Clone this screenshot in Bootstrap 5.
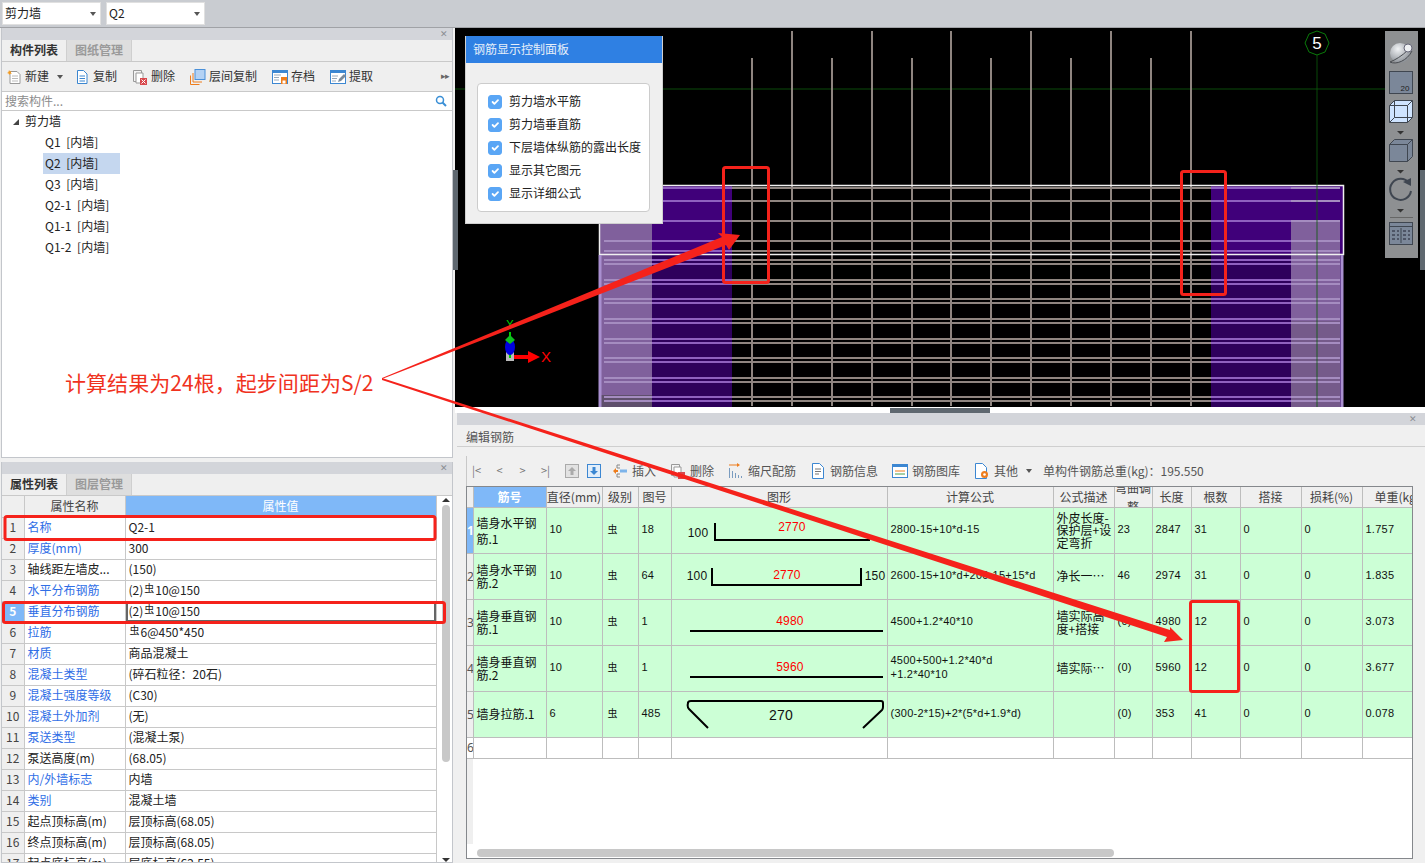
<!DOCTYPE html>
<html lang="zh-CN">
<head>
  <meta charset="UTF-8">
  <meta name="viewport" content="width=device-width, initial-scale=1.0">
  <title>编辑钢筋</title>
  <link href="https://cdn.jsdelivr.net/npm/bootstrap@5.3.3/dist/css/bootstrap.min.css" rel="stylesheet">
  <style>
    html, body { height: 863px; overflow: hidden; }
    body { position: relative; width: 1425px; background: #f0f0f0; color: #222; font: 12px/1.2 "Noto Sans CJK SC", "Noto Sans", sans-serif; }
    .top-strip { height: 28px; padding: 2px 2px 0; background: #c9ccd1; border-bottom: 1px solid #a0a2a6; gap: 5px; }
    .combo { width: 99px; height: 23px; padding: 0 4px 0 2px; background: #fff; border: 1px solid #e0e0e0; font-size: 12px; }
    .caret-down { width: 0; height: 0; border: 3px solid transparent; border-top: 4px solid #555; border-bottom: 0; display: inline-block; }
    .work { height: 835px; }
    .left-col { width: 452px; margin-left: 1px; gap: 4px; }
    .dock { background: #fff; border: 1px solid #c3c6cb; border-top: 0; overflow: hidden; }
    .dock-tree { height: 430px; }
    .dock-props { height: 401px; }
    .grip { height: 12px; background: #d3d5da; color: #8a8d92; font-size: 9px; line-height: 12px; padding-right: 4px; flex: none; }
    .tab-strip { height: 22px; background: #efefef; border-bottom: 1px solid #c9c9c9; flex: none; flex-wrap: nowrap; }
    .tab-item { width: 65px; height: 21px; line-height: 20px; text-align: center; font-weight: 700; color: #333; border-right: 1px solid #cfcfcf; }
    .tab-item.off { background: #dedede; color: #9a9a9a; }
    .tool-row { height: 30px; background: #efefef; border-bottom: 1px solid #c9c9c9; padding-left: 4px; gap: 15px; color: #333; flex: none; }
    .tool-item { display: flex; align-items: center; }
    .tool-item svg { width: 16px; height: 16px; margin-right: 3px; flex: none; }
    .tool-first { margin-right: -4px; }
    .tool-more { margin-left: auto; margin-right: 3px; color: #666; font-size: 9px; letter-spacing: -1px; }
    .find-row { height: 19px; border-bottom: 1px solid #c9c9c9; padding: 0 5px 0 3px; color: #8c8c8c; flex: none; }
    .tree-list { padding: 0; }
    .tree-list li { height: 21px; line-height: 20px; padding-left: 43px; width: 118px; white-space: nowrap; word-spacing: 3px; }
    .tree-list li.root { padding-left: 23px; position: relative; }
    .tree-list li.root::before { content: ""; position: absolute; left: 11px; top: 8px; border: 3px solid transparent; border-right-color: #444; border-bottom-color: #444; }
    .tree-list li.picked { background: #c5d7ef; margin-left: 41px; padding-left: 2px; width: 77px; }
    .props-wrap { position: relative; height: 100%; overflow: hidden; }
    .props-table { width: 434px; table-layout: fixed; border-collapse: collapse; margin: 0; }
    .props-table.table > :not(caption) > * > * { padding: 0 3px; height: 21px; line-height: 18px; border-width: 0 1px 1px 0; border-style: solid; border-color: #c8c8c8; background: #fff; color: #222; white-space: nowrap; overflow: hidden; font-size: 12px; box-shadow: none; vertical-align: top; }
    .props-table.table > thead > tr > th { height: 21px; line-height: 16px; background: #efefef; font-weight: 400; text-align: center; color: #444; vertical-align: middle; }
    .props-table.table > thead > tr > th.lit { background: #7fb8f8; color: #fff; }
    .props-table.table > tbody > tr > td.num { background: #efefef; text-align: center; padding: 0; color: #444; }
    .props-table.table > tbody > tr > td.num.lit { background: #7fb8f8; color: #fff; font-weight: 700; }
    .props-table.table > tbody > tr > td.blue { color: #2f6ee6; }
    .props-table.table > tbody > tr > td.focus { box-shadow: inset 0 0 0 2px #666; }
    .c-num { width: 22px; } .c-name { width: 101px; } .c-val { width: 311px; }
    .steel { font-size: 10px; position: relative; top: -3px; margin: 0 1px; }
    .vbar { position: absolute; left: 436px; top: 0; bottom: 0; width: 15px; background: #fff; }
    .vbar i { position: absolute; left: 4px; top: 9px; width: 8px; height: 257px; background: #c8c8c8; border-radius: 4px; }
    .vbar b { position: absolute; left: 4px; top: 2px; border: 4px solid transparent; border-bottom: 4px solid #333; border-top: 0; }
    .vbar u { position: absolute; left: 4px; bottom: 0; border: 4px solid transparent; border-top: 4px solid #333; border-bottom: 0; }
    .split-v { width: 2px; }
    .right-col { width: 970px; }
    .scene { height: 379px; background: #000; position: relative; flex: none; }
    .scene > svg { display: block; }
    .split-h { height: 6px; background: #fff; position: relative; flex: none; }
    .split-h i { position: absolute; left: 435px; top: 1px; width: 100px; height: 5px; background: #5f6870; }
    .side-tab { position: absolute; top: 170px; width: 5px; height: 100px; background: #5f6870; z-index: 3; }
    .side-l { left: 453px; } .side-r { left: 1420px; }
    .rebar-panel { position: absolute; left: 10px; top: 8px; width: 198px; height: 188px; background: #efefef; border: 1px solid #d0d0d0; border-top: 0; }
    .rebar-panel h6 { height: 27px; margin: 0; padding: 0 7px; line-height: 26px; font-size: 12px; font-weight: 400; background: #2f80e3; color: #e6effa; }
    .check-box { margin: 20px 12px 0 11px; height: 129px; padding: 6px 0 6px 10px; background: #fff; border: 1px solid #ccc; border-radius: 4px; }
    .check-box .form-check { height: 23px; min-height: 0; margin: 0; padding: 0; gap: 7px; }
    .check-box .form-check-input { width: 14px; height: 14px; margin: 0; float: none; flex: none; background-color: #5aa6f5; border-color: #5aa6f5; border-radius: 3px; }
    .check-box .form-check-label { font-size: 12px; color: #222; white-space: nowrap; }
    .edit-dock { height: 450px; margin-left: 2px; flex: none; }
    .edit-dock .grip { padding-right: 8px; }
    .edit-title { height: 22px; padding: 1px 0 0 9px; line-height: 22px; color: #555; background: #f0f0f0; border-bottom: 1px solid #cfcfcf; }
    .edit-body { padding: 9px 13px 4px 9px; height: 416px; }
    .edit-tools { height: 30px; padding-left: 4px; gap: 14px; color: #555; border-left: 1px solid #c8c8c8; }
    .edit-tools .pager { width: 11px; color: #777; font-size: 11px; text-align: center; }
    .edit-tools .tool-item svg { margin-right: 4px; }
    .pager-set { gap: 12px; }
    .arrow-set { gap: 8px; margin-right: -3px; }
    .other-item { margin-right: -3px; }
    .grid-box { position: relative; height: 373px; width: 947px; background: #fff; border: 1px solid #85888c; overflow: hidden; }
    .grid-box::before { content: ""; position: absolute; left: 0; top: 0; width: 6px; height: 357px; background: #efefef; }
    .bar-grid { position: relative; width: 945px; table-layout: fixed; border-collapse: collapse; margin: 0; }
    .bar-grid.table > :not(caption) > * > * { padding: 0 3px 3px; border-width: 0 1px 1px 0; border-style: solid; border-color: #bdbdbd; box-shadow: none; background: #ccffd6; color: #111; height: 46px; font: 11px/14px "Liberation Sans", "Noto Sans CJK SC", sans-serif; letter-spacing: .25px; vertical-align: middle; overflow: hidden; }
    .bar-grid.table > thead > tr > th { height: 20px; padding: 0; background: #efefef; color: #444; font: 12px/14px "Noto Sans CJK SC", sans-serif; letter-spacing: 0; text-align: center; white-space: nowrap; }
    .bar-grid.table > thead > tr > th.lit { background: #7fb8f8; color: #fff; font-weight: 700; }
    .bar-grid.table > tbody > tr > td.zh { padding-bottom: 0; font: 12px/12.500px "Noto Sans CJK SC", sans-serif; letter-spacing: 0; white-space: nowrap; }
    .bar-grid.table > tbody > tr > td.zh-wide { line-height: 16px; }
    .bar-grid.table > tbody > tr > td.grade { font: 10px/14px "Noto Sans CJK SC", sans-serif; letter-spacing: 0; padding-left: 5px; }
    .bar-grid.table > tbody > tr > td.idx { padding: 0; background: #efefef; color: #555; font: 12px/14px "Noto Sans", sans-serif; letter-spacing: 0; text-align: center; border-color: #bdbdbd; }
    .bar-grid.table > tbody > tr > td.idx.lit { background: #7fb8f8; color: #fff; font-weight: 700; }
    .bar-grid.table > tbody > tr > td.draw { padding: 0; }
    .bar-grid.table > tbody > tr > td.draw svg { display: block; }
    .bar-grid.table > tbody > tr.blank > td { height: 21px; background: #fff; }
    .head-clip { height: 20px; overflow: hidden; display: flex; align-items: center; justify-content: center; white-space: normal; line-height: 19px; }
    .head-tail { height: 20px; overflow: hidden; padding-left: 12px; line-height: 19px; text-align: left; white-space: nowrap; }
    .w-i { width: 6px; } .w-a { width: 73px; } .w-b { width: 56px; } .w-c { width: 36px; } .w-d { width: 33px; } .w-e { width: 216px; }
    .w-f { width: 166px; } .w-g { width: 61px; } .w-h { width: 38px; } .w-j { width: 39px; } .w-k { width: 49px; } .w-l { width: 50px; }
    .hbar { position: absolute; left: 10px; bottom: 1px; width: 637px; height: 8px; background: #c8c8c8; border-radius: 4px; }
    .mark-layer { position: absolute; left: 0; top: 0; z-index: 5; pointer-events: none; }
    .callout { position: absolute; left: 65px; top: 367px; z-index: 6; font-size: 21px; line-height: 30px; color: #f0321e; white-space: nowrap; letter-spacing: .05px; }
  </style>
</head>
<body>
  <div class="top-strip d-flex align-items-start">
    <div class="combo d-flex align-items-center justify-content-between"><span>剪力墙</span><span class="caret-down"></span></div>
    <div class="combo d-flex align-items-center justify-content-between"><span>Q2</span><span class="caret-down"></span></div>
  </div>

  <div class="work d-flex">
    <!-- 左侧面板 -->
    <div class="left-col d-flex flex-column">
      <section class="dock dock-tree d-flex flex-column">
        <div class="grip text-end">✕</div>
        <div class="nav tab-strip"><div class="tab-item">构件列表</div><div class="tab-item off">图纸管理</div></div>
        <div class="tool-row d-flex align-items-center">
          <div class="tool-item tool-first">
            <svg viewBox="0 0 16 16"><path d="M4 2.500h7l3 3v9H4z" fill="#fff" stroke="#999"/><path d="M6 7h6M6 9.500h6M6 12h6" stroke="#bbb"/><path d="M3 1l1 1.500 1.500-.5-.7 1.500 1 1.200-1.700 0-1 1.300-.5-1.500L1 4l1.400-.8z" fill="#f39a1e"/></svg>
            <span>新建</span><span class="caret-down ms-2"></span>
          </div>
          <div class="tool-item"><svg viewBox="0 0 16 16"><path d="M3.500 1.500h6l3.500 3.500v9.500h-9.500z" fill="#fff" stroke="#3b86d0"/><path d="M5.500 7h5.500M5.500 9.500h5.500M5.500 12h5.500" stroke="#3b86d0"/></svg><span>复制</span></div>
          <div class="tool-item"><svg viewBox="0 0 16 16"><path d="M1.500 1.500h8v11h-8z" fill="#f4f4f4" stroke="#999"/><path d="M4 4h7v10H4z" fill="#fff" stroke="#999"/><rect x="8" y="9" width="7" height="7" fill="#d8484d"/><path d="M9.500 10.500l4 4m0-4l-4 4" stroke="#fff"/></svg><span>删除</span></div>
          <div class="tool-item"><svg viewBox="0 0 16 16"><path d="M.5 15.500v-9M.5 15.500h9" stroke="#ee7d1c" fill="none"/><path d="M3 13v-9M3 13h9" stroke="#ee7d1c" fill="none"/><rect x="5" y=".5" width="10" height="10" fill="#b4d2f4" stroke="#4a90d9"/></svg><span>层间复制</span></div>
          <div class="tool-item"><svg viewBox="0 0 16 16"><rect x=".5" y="1.500" width="15" height="13" fill="#fff" stroke="#3c87d2"/><rect x="0" y="1" width="16" height="3" fill="#3c87d2"/><path d="M2 6h7M2 8.500h5M2 11h5" stroke="#9ab"/><rect x="9" y="8" width="6" height="7" fill="#ee7d1c"/><rect x="10.500" y="11.500" width="3" height="3" fill="#fff"/></svg><span>存档</span></div>
          <div class="tool-item"><svg viewBox="0 0 16 16"><rect x=".5" y="1.500" width="15" height="13" fill="#fff" stroke="#3c87d2"/><rect x="0" y="1" width="16" height="3" fill="#3c87d2"/><path d="M2 7h6M2 9.500h5M2 12h4" stroke="#9ab"/><path d="M8 13l1-3 5-5 2 2-5 5z" fill="#7a8a9a"/></svg><span>提取</span></div>
          <div class="tool-more">▸▸</div>
        </div>
        <div class="find-row d-flex align-items-center justify-content-between">
          <span>搜索构件...</span>
          <svg width="12" height="12" viewBox="0 0 12 12"><circle cx="5" cy="5" r="3.500" fill="none" stroke="#3a8fd6" stroke-width="1.500"/><path d="M7.500 7.500l3.500 3.500" stroke="#3a8fd6" stroke-width="2"/></svg>
        </div>
        <ul class="tree-list list-unstyled mb-0">
          <li class="root">剪力墙</li>
          <li>Q1 [内墙]</li>
          <li class="picked">Q2 [内墙]</li>
          <li>Q3 [内墙]</li>
          <li>Q2-1 [内墙]</li>
          <li>Q1-1 [内墙]</li>
          <li>Q1-2 [内墙]</li>
        </ul>
      </section>

      <section class="dock dock-props d-flex flex-column">
        <div class="grip text-end">✕</div>
        <div class="nav tab-strip"><div class="tab-item">属性列表</div><div class="tab-item off">图层管理</div></div>
        <div class="props-wrap">
          <table class="table props-table">
            <colgroup><col class="c-num"><col class="c-name"><col class="c-val"></colgroup>
            <thead><tr><th></th><th>属性名称</th><th class="lit">属性值</th></tr></thead>
            <tbody id="propRows"></tbody>
          </table>
          <div class="vbar"><b></b><i></i><u></u></div>
        </div>
      </section>
    </div>

    <div class="split-v"></div>

    <div class="right-col d-flex flex-column">
      <!-- 三维视图 -->
      <div class="scene">
        <svg id="scene3d" width="970" height="379" viewBox="455 28 970 379"></svg>
        <div class="rebar-panel">
          <h6>钢筋显示控制面板</h6>
          <div class="check-box">
            <div class="form-check d-flex align-items-center"><input class="form-check-input" type="checkbox" checked id="ck1"><label class="form-check-label" for="ck1">剪力墙水平筋</label></div>
            <div class="form-check d-flex align-items-center"><input class="form-check-input" type="checkbox" checked id="ck2"><label class="form-check-label" for="ck2">剪力墙垂直筋</label></div>
            <div class="form-check d-flex align-items-center"><input class="form-check-input" type="checkbox" checked id="ck3"><label class="form-check-label" for="ck3">下层墙体纵筋的露出长度</label></div>
            <div class="form-check d-flex align-items-center"><input class="form-check-input" type="checkbox" checked id="ck4"><label class="form-check-label" for="ck4">显示其它图元</label></div>
            <div class="form-check d-flex align-items-center"><input class="form-check-input" type="checkbox" checked id="ck5"><label class="form-check-label" for="ck5">显示详细公式</label></div>
          </div>
        </div>
      </div>
      <div class="split-h"><i></i></div>

      <!-- 编辑钢筋 -->
      <section class="edit-dock d-flex flex-column">
        <div class="grip text-end">✕</div>
        <div class="edit-title">编辑钢筋</div>
        <div class="edit-body">
          <div class="edit-tools d-flex align-items-center">
            <div class="d-flex pager-set align-items-center">
              <span class="pager">|&lt;</span><span class="pager">&lt;</span><span class="pager">&gt;</span><span class="pager">&gt;|</span>
            </div>
            <div class="d-flex arrow-set">
              <svg width="14" height="14" viewBox="0 0 14 14"><rect x=".5" y=".5" width="13" height="13" fill="#e2e2e2" stroke="#aaa"/><path d="M7 3l4 4H8.500v4h-3V7H3z" fill="#aaa"/></svg>
              <svg width="14" height="14" viewBox="0 0 14 14"><rect x=".5" y=".5" width="13" height="13" fill="#e2eefa" stroke="#3c87d2"/><path d="M7 11L3 7h2.500V3h3v4H11z" fill="#3c87d2"/></svg>
            </div>
            <div class="tool-item"><svg viewBox="0 0 16 16"><path d="M5 2h3M5 14h3M5 2v3h3M5 14v-3h3" stroke="#888" fill="none"/><path d="M1 8l3-3v2h2v2H4v2z" fill="#ee7d1c"/><rect x="8" y="6.500" width="7" height="3" fill="#7db4ea"/></svg><span>插入</span></div>
            <div class="tool-item"><svg viewBox="0 0 16 16"><path d="M1.500 1.500h8v11h-8z" fill="#f4f4f4" stroke="#999"/><path d="M4 4h7v10H4z" fill="#fff" stroke="#999"/><rect x="8" y="9" width="7" height="7" fill="#d8484d"/></svg><span>删除</span></div>
            <div class="tool-item"><svg viewBox="0 0 16 16"><path d="M1 2h8" stroke="#ee7d1c"/><path d="M9 0l3 2-3 2z" fill="#ee7d1c"/><path d="M1.500 5v10M4.500 8v7M7.500 10v5M10.500 12v3M13.500 13v2" stroke="#7a9cc0"/></svg><span>缩尺配筋</span></div>
            <div class="tool-item"><svg viewBox="0 0 16 16"><path d="M2.500 .5h7l4 4v11h-11z" fill="#fff" stroke="#3c87d2"/><path d="M5 6h6M5 8.500h6M5 11h4" stroke="#777"/></svg><span>钢筋信息</span></div>
            <div class="tool-item"><svg viewBox="0 0 16 16"><rect x=".5" y="1.500" width="15" height="13" fill="#fff" stroke="#3c87d2"/><rect x="0" y="1" width="16" height="3" fill="#3c87d2"/><path d="M3 8h10" stroke="#ee7d1c"/><path d="M3 11h10" stroke="#4aa04a"/></svg><span>钢筋图库</span></div>
            <div class="tool-item other-item"><svg viewBox="0 0 16 16"><path d="M1.500 .5h7l4 4v11h-11z" fill="#fff" stroke="#3c87d2"/><circle cx="10.500" cy="11.500" r="3.500" fill="#ee7d1c"/><circle cx="10.500" cy="11.500" r="1.300" fill="#fff"/></svg><span>其他</span><span class="caret-down ms-2"></span></div>
            <div>单构件钢筋总重(kg)：195.550</div>
          </div>
          <div class="grid-box">
            <table class="table bar-grid">
              <colgroup><col class="w-i"><col class="w-a"><col class="w-b"><col class="w-c"><col class="w-d"><col class="w-e"><col class="w-f"><col class="w-g"><col class="w-h"><col class="w-j"><col class="w-k"><col class="w-g"><col class="w-g"><col class="w-l"></colgroup>
              <thead>
                <tr>
                  <th></th><th class="lit">筋号</th><th>直径(mm)</th><th>级别</th><th>图号</th><th>图形</th><th>计算公式</th><th>公式描述</th>
                  <th><div class="head-clip">弯曲调整</div></th><th>长度</th><th>根数</th><th>搭接</th><th>损耗(%)</th><th><div class="head-tail">单重(kg)</div></th>
                </tr>
              </thead>
              <tbody id="barRows"></tbody>
            </table>
            <div class="hbar"></div>
          </div>
        </div>
      </section>
    </div>
  </div>

  <div class="side-tab side-l"></div>
  <div class="side-tab side-r"></div>

  <!-- 红色标注 -->
  <svg class="mark-layer" width="1425" height="863" viewBox="0 0 1425 863">
    <g fill="none" stroke="#f5221b" stroke-width="3">
      <rect x="5" y="516.500" width="430" height="23" rx="2"/>
      <rect x="3.500" y="602.500" width="441" height="20" rx="2"/>
      <rect x="723.500" y="167.500" width="45" height="115" rx="2"/>
      <rect x="1181.500" y="171.500" width="44" height="123" rx="2"/>
      <rect x="1190.500" y="601.500" width="48" height="90" rx="2"/>
    </g>
    <g fill="#f5221b">
      <polygon points="382,378 722,237 718,233 740,235 729,250 726,245 382,379"/>
      <polygon points="382,378 1170,630 1170,627 1183,640 1164,642 1167,637 382,380"/>
    </g>
  </svg>
  <div class="callout">计算结果为24根，起步间距为S/2</div>

  <script>
    const steel = '<span class="steel">虫</span>';
    const props = [
      ['名称', 'Q2-1', 1], ['厚度(mm)', '300', 1], ['轴线距左墙皮...', '(150)', 0],
      ['水平分布钢筋', '(2)' + steel + '10@150', 1], ['垂直分布钢筋', '(2)' + steel + '10@150', 1],
      ['拉筋', steel + '6@450*450', 1], ['材质', '商品混凝土', 1], ['混凝土类型', '(碎石粒径：20石)', 1],
      ['混凝土强度等级', '(C30)', 1], ['混凝土外加剂', '(无)', 1], ['泵送类型', '(混凝土泵)', 1],
      ['泵送高度(m)', '(68.05)', 0], ['内/外墙标志', '内墙', 1], ['类别', '混凝土墙', 1],
      ['起点顶标高(m)', '层顶标高(68.05)', 0], ['终点顶标高(m)', '层顶标高(68.05)', 0], ['起点底标高(m)', '层底标高(62.55)', 0]
    ];
    document.getElementById('propRows').innerHTML = props.map((p, i) => `
      <tr>
        <td class="num${i === 4 ? ' lit' : ''}">${i + 1}</td>
        <td class="${p[2] ? 'blue' : ''}">${p[0]}</td>
        <td class="${i === 4 ? 'focus' : ''}">${p[1]}</td>
      </tr>`).join('');

    const red = 'fill="#f00" font-size="12" font-family="Liberation Sans" letter-spacing=".2" text-anchor="middle"';
    const blk = 'fill="#111" font-size="12" font-family="Liberation Sans" letter-spacing=".2" text-anchor="middle"';
    const line = 'fill="none" stroke="#000" stroke-width="2"';
    const shape = inner => `<svg width="215" height="45" viewBox="0 0 215 45">${inner}</svg>`;
    const bars = [
      ['墙身水平钢<br>筋.1', '10', '18', shape(`<text x="26" y="29" ${blk}>100</text><path d="M43 15v17h155" ${line}/><text x="120" y="23" ${red}>2770</text>`),
        '2800-15+10*d-15', '外皮长度-<br>保护层+设<br>定弯折', '23', '2847', '31', '1.757'],
      ['墙身水平钢<br>筋.2', '10', '64', shape(`<text x="25" y="26" ${blk}>100</text><path d="M40 14v17h149v-17" ${line}/><text x="115" y="25" ${red}>2770</text><text x="203" y="26" ${blk}>150</text>`),
        '2600-15+10*d+200-15+15*d', '净长一⋯', '46', '2974', '31', '1.835'],
      ['墙身垂直钢<br>筋.1', '10', '1', shape(`<path d="M18 31h193" ${line}/><text x="118" y="25" ${red}>4980</text>`),
        '4500+1.2*40*10', '墙实际高<br>度+搭接', '(0)', '4980', '12', '3.073'],
      ['墙身垂直钢<br>筋.2', '10', '1', shape(`<path d="M18 31h193" ${line}/><text x="118" y="25" ${red}>5960</text>`),
        '4500+500+1.2*40*d<br>+1.2*40*10', '墙实际⋯', '(0)', '5960', '12', '3.677'],
      ['墙身拉筋.1', '6', '485', shape(`<path d="M36 36L17 17q-2-2-1-6q0-2 3-2h190q2 0 2 2v4q0 2-1 3L191 36" ${line}/><text x="109" y="28" fill="#111" font-size="14" font-family="Liberation Sans" text-anchor="middle">270</text>`),
        '(300-2*15)+2*(5*d+1.9*d)', '', '(0)', '353', '41', '0.078']
    ];
    document.getElementById('barRows').innerHTML = bars.map((b, i) => `
      <tr>
        <td class="idx${i === 0 ? ' lit' : ''}">${i + 1}</td>
        <td class="zh${i === 0 ? ' zh-wide' : ''}">${b[0]}</td><td>${b[1]}</td><td class="grade">虫</td><td>${b[2]}</td><td class="draw">${b[3]}</td>
        <td>${b[4]}</td><td class="zh">${b[5]}</td><td>${b[6]}</td><td>${b[7]}</td><td>${b[8]}</td><td>0</td><td>0</td><td>${b[9]}</td>
      </tr>`).join('') + `<tr class="blank"><td class="idx">6</td>${'<td></td>'.repeat(13)}</tr>`;

    // 三维视图用页面坐标画
    const ys = [188, 201, 221, 241, 251, 260, 264, 280, 284, 299, 303, 319, 323, 339, 343, 358, 362, 378, 382, 397, 401];
    let s = '<defs><radialGradient id="ballFill" cx=".4" cy=".3" r=".8"><stop offset="0" stop-color="#f2f4f6"/><stop offset="1" stop-color="#80858c"/></radialGradient></defs>';
    s += '<path d="M455 89H1385" stroke="#0b4a0b"/>';
    s += '<rect x="600" y="185" width="132" height="70" fill="#40007a"/><rect x="1211" y="185" width="132" height="70" fill="#40007a"/>';
    s += '<rect x="600" y="255" width="132" height="152" fill="#2e005c"/><rect x="1211" y="255" width="132" height="152" fill="#2e005c"/>';
    s += '<rect x="600" y="220" width="52" height="187" fill="#80609c"/><rect x="1291" y="220" width="49" height="101" fill="#80609c"/><rect x="1291" y="321" width="49" height="86" fill="#755a8a"/>';
    s += '<rect x="599" y="395" width="53" height="12" fill="#5f4f6c"/>';
    ys.forEach(y => {
      s += `<path d="M732 ${y}H1211" stroke="#8f8580" stroke-width="2"/>`;
      s += `<path d="M604 ${y}H732M1211 ${y}H1340" stroke="#8f60c0" stroke-width="2"/>`;
      s += `<path d="M604 ${y}H652M1291 ${y}H1340" stroke="#a58cc0" stroke-width="2"/>`;
    });
    [[752, 58], [792, 31], [832, 58], [872, 31], [912, 58], [951, 31], [991, 58], [1031, 31], [1071, 58], [1111, 31], [1151, 58], [1191, 31]].forEach(v => {
      s += `<path d="M${v[0]} ${v[1]}V406" stroke="#8f8580" stroke-width="2"/>`;
    });
    s += '<path d="M599.500 185.500H1343.500V254.500H599.500z" fill="none" stroke="#f0f0f0" stroke-width="1.500"/>';
    s += '<path d="M600 255V407M1342 255V407" stroke="#a98fd0" stroke-width="3"/>';
    s += '<path d="M1317 55V407" stroke="#0b5a0b" stroke-opacity=".8"/>';
    s += '<polygon points="1317,31 1325,34 1329,43 1325,52 1317,55 1309,52 1305,43 1309,34" fill="#000" stroke="#0a7a0a"/>';
    s += '<text x="1317" y="49" fill="#fff" font-size="17" font-family="Liberation Sans" text-anchor="middle">5</text>';
    // 坐标轴
    s += '<rect x="506" y="352" width="8" height="9" fill="#bbb"/><path d="M510 358V332" stroke="#00d000" stroke-width="2"/><ellipse cx="510" cy="347" rx="5" ry="8" fill="#0000e0"/><path d="M505 340l5-5 5 5-5 4z" fill="#10c020"/>';
    s += '<path d="M514 357H530" stroke="#f00" stroke-width="4"/><path d="M528 351l12 6-12 6z" fill="#f00"/>';
    s += '<text x="546" y="362" fill="#f00" font-size="15" font-family="Liberation Sans" text-anchor="middle">X</text><text x="510" y="328" fill="#00d000" font-size="11" font-family="Liberation Sans" text-anchor="middle">Y</text>';
    // 右侧工具条
    s += '<rect x="1385" y="31" width="33" height="227" fill="#8e9092"/>';
    s += '<circle cx="1400" cy="53" r="10" fill="url(#ballFill)"/><path d="M1390 62c6 3 17-1 22-11M1390 62c5-2 12-6 18-12" fill="none" stroke="#4a4d52"/><circle cx="1408" cy="48" r="4" fill="#eef0f2" stroke="#667"/>';
    s += '<rect x="1389.500" y="71.500" width="23" height="22" fill="#7b8799" stroke="#3f4650"/><text x="1405" y="91" fill="#222" font-size="8" font-family="Liberation Sans" text-anchor="middle">20</text>';
    s += '<path d="M1389.500 105.500l5-5h18v17l-5 5h-18z" fill="#cfe4ff" stroke="#3f4650"/><path d="M1389.500 105.500h18v17M1407.500 105.500l5-5M1394.500 100.500v17h18M1389.500 122.500l5-5" fill="none" stroke="#3f4650"/>';
    s += '<path d="M1397 131h7l-3.500 3.500z" fill="#333"/>';
    s += '<path d="M1389.500 144.500l5-5h18v17l-5 5h-18z" fill="#7b8799" stroke="#3f4650"/><path d="M1389.500 144.500h18v17M1407.500 144.500l5-5" fill="none" stroke="#3f4650"/>';
    s += '<path d="M1397 170h7l-3.500 3.500z" fill="#333"/>';
    s += '<path d="M1409 183a10.500 10.500 0 1 0 2 8" fill="none" stroke="#3f4650" stroke-width="2"/><path d="M1403 182l8-4v8z" fill="#3f4650"/>';
    s += '<path d="M1397 209h7l-3.500 3.500z" fill="#333"/><path d="M1390 217.500h23" stroke="#666"/>';
    s += '<rect x="1389.500" y="222.500" width="23" height="22" fill="#7b8799" stroke="#3f4650"/><path d="M1389.500 226.500h23M1401 228v15" stroke="#3f4650"/><path d="M1392 231h3M1392 235h3M1392 239h3M1397 231h2M1397 235h2M1397 239h2M1403 231h3M1403 235h3M1403 239h3M1408 231h2M1408 235h2M1408 239h2" stroke="#223"/>';
    document.getElementById('scene3d').innerHTML = s;
  </script>
  <script src="https://cdn.jsdelivr.net/npm/bootstrap@5.3.3/dist/js/bootstrap.bundle.min.js"></script>
</body>
</html>
